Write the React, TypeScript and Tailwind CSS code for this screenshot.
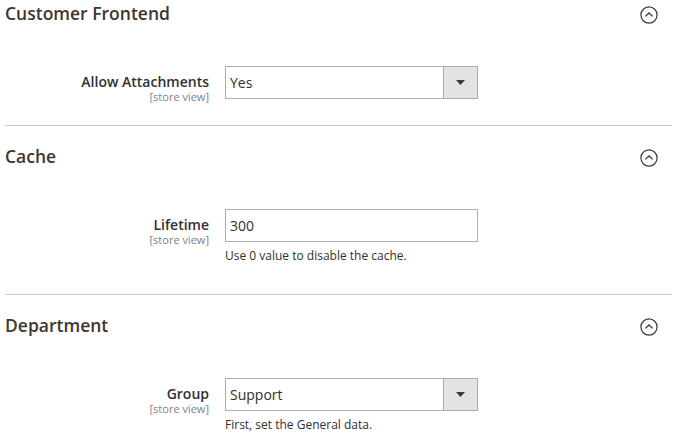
import React from 'react';

type Field = {
  label: string;
  kind: 'select' | 'input';
  value: string;
  note?: string;
};

type Section = {
  title: string;
  field: Field;
};

const SECTIONS: Section[] = [
  { title: 'Customer Frontend', field: { label: 'Allow Attachments', kind: 'select', value: 'Yes' } },
  { title: 'Cache', field: { label: 'Lifetime', kind: 'input', value: '300', note: 'Use 0 value to disable the cache.' } },
  { title: 'Department', field: { label: 'Group', kind: 'select', value: 'Support', note: 'First, set the General data.' } },
];

const CollapseIcon = () => (
  <svg width="18" height="18" viewBox="0 0 18 18" className="mt-[6px] mr-[14px]">
    <circle cx="9" cy="9" r="8.1" fill="none" stroke="#41362f" strokeWidth="1.2" />
    <path d="M5.4 10.4 L9 7 L12.6 10.4" fill="none" stroke="#41362f" strokeWidth="1.3" />
  </svg>
);

const Control = ({ field }: { field: Field }) => {
  if (field.kind === 'input') {
    return (
      <div className="h-[33px] border border-[#adadad] bg-white flex items-center pl-[4px] text-[14px] text-[#303030]">
        {field.value}
      </div>
    );
  }
  return (
    <div className="h-[33px] border border-[#adadad] bg-white flex items-stretch text-[14px] text-[#303030]">
      <div className="flex-1 flex items-center pl-[4px]">{field.value}</div>
      <div className="w-[34px] border-l border-[#adadad] bg-[#e3e3e3] flex items-center justify-center">
        <svg width="9" height="5" viewBox="0 0 9 5">
          <path d="M0 0 H9 L4.5 5 Z" fill="#41362f" />
        </svg>
      </div>
    </div>
  );
};

const SectionBlock = ({ section, first }: { section: Section; first: boolean }) => (
  <div className={first ? '' : 'border-t border-[#cccccc] pt-[17px]'}>
    <div className="flex items-start justify-between h-[30px]">
      <h2 className="pt-[3px] text-[17.5px] leading-[20px] font-semibold text-[#41362f]">{section.title}</h2>
      <CollapseIcon />
    </div>
    <div className="flex items-start mt-[36px] gap-[16px]">
      <div className="w-[204px] h-[33px] text-right pt-[8px]">
        <div className="text-[14px] leading-[16px] font-semibold text-[#303030]">{section.field.label}</div>
        <div className="text-[11px] leading-[13px] text-[#808080]">[store view]</div>
      </div>
      <div className="w-[253px]">
        <Control field={section.field} />
        {section.field.note && (
          <div className="mt-[5px] text-[12px] leading-[18px] text-[#303030]">{section.field.note}</div>
        )}
      </div>
    </div>
    <div className={section.field.note ? 'h-[29px]' : 'h-[26px]'} />
  </div>
);

export default function App() {
  return (
    <div className="w-[679px] h-[435px] overflow-hidden bg-white" style={{ fontFamily: '"Open Sans", sans-serif' }}>
      <div className="ml-[5px] w-[667px]">
        {SECTIONS.map((s, i) => (
          <SectionBlock key={s.title} section={s} first={i === 0} />
        ))}
      </div>
    </div>
  );
}
